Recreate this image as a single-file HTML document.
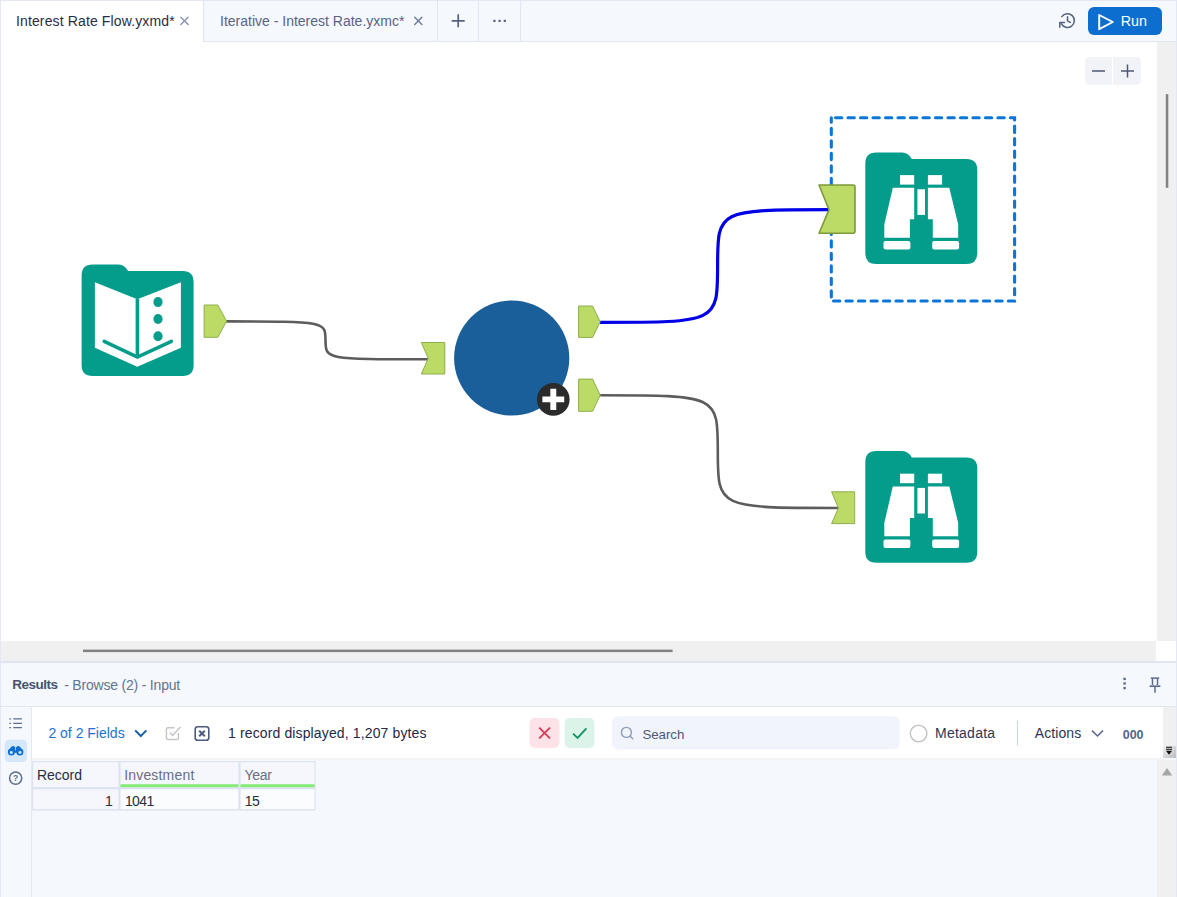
<!DOCTYPE html>
<html lang="en">
<head>
<meta charset="utf-8">
<title>Interest Rate Flow</title>
<style>
*{box-sizing:border-box;margin:0;padding:0}
html,body{width:1177px;height:897px;overflow:hidden;background:#fff}
body{position:relative;font-family:"Liberation Sans",sans-serif;font-size:14px;color:#252a45}
.abs{position:absolute}
.t{position:absolute;white-space:nowrap;line-height:1}
/* tab bar */
#tabbar{left:0;top:0;width:1177px;height:42px;background:#f5f8fd;border-top:1px solid #e3e8f4;border-bottom:1px solid #e0e6f2}
#tab1{left:1px;top:1px;width:202px;height:41px;background:#fff}
.vsep{position:absolute;top:1px;width:1px;height:40px;background:#e0e6f2}
#runbtn{left:1088px;top:7px;width:74px;height:28px;border-radius:6px;background:#0c6fd0}
/* canvas */
#canvas{left:0;top:42px;width:1157px;height:599px;background:#fff}
#vscroll{left:1157px;top:42px;width:19px;height:599px;background:#f0f0f0}
#hscroll{left:1px;top:641px;width:1155px;height:20px;background:#f0f0f0}
#zoomctl{left:1085px;top:57px;width:56px;height:28px;border-radius:5px;background:#f1f3f9}
/* results */
#reshead{left:0;top:661px;width:1177px;height:46px;background:#f5f8fd;border-top:2px solid #dfe5f2;border-bottom:1px solid #e0e6f2}
#resbody{left:0;top:707px;width:1177px;height:190px;background:#f5f8fd}
#sidebar{left:1px;top:707px;width:31px;height:190px;background:#f5f8fd;border-right:1px solid #e3e8f3}
#toolbar{left:32px;top:707px;width:1131px;height:53px;background:#fff;border-bottom:2px solid #f2f3f5}
.edge{position:absolute;top:0;width:1px;height:897px;background:#e3e8f4}
</style>
</head>
<body>
<div id="tabbar" class="abs"></div>
<div id="tab1" class="abs"></div>
<div class="vsep" style="left:203px"></div>
<div class="vsep" style="left:437px"></div>
<div class="vsep" style="left:478px"></div>
<div class="vsep" style="left:520px"></div>
<div id="runbtn" class="abs"></div>

<div id="canvas" class="abs"></div>
<div id="vscroll" class="abs"></div>
<div id="hscroll" class="abs"></div>
<div id="zoomctl" class="abs"></div>

<div id="reshead" class="abs"></div>
<div id="resbody" class="abs"></div>
<div id="sidebar" class="abs"></div>
<div id="toolbar" class="abs"></div>
<div class="edge" style="left:0"></div>
<div class="edge" style="left:1176px"></div>


<svg id="ov" class="abs" style="left:0;top:0" width="1177" height="897" viewBox="0 0 1177 897">
<!-- tab bar icons -->
<g stroke="#8a94b0" stroke-width="1.4" fill="none" stroke-linecap="round">
  <path d="M180.9 17.3 l7.2 7.2 M188.1 17.3 l-7.2 7.2"/>
</g>
<g stroke="#6f7a99" stroke-width="1.4" fill="none" stroke-linecap="round">
  <path d="M414.7 17.2 l7.2 7.2 M421.9 17.2 l-7.2 7.2"/>
</g>
<g stroke="#56617f" stroke-width="1.7" fill="none">
  <path d="M451.7 20.8 h13 M458.2 14.3 v13"/>
</g>
<g fill="#56617f">
  <rect x="493.3" y="19.8" width="2.2" height="2.2"/><rect x="498.5" y="19.8" width="2.2" height="2.2"/><rect x="503.7" y="19.8" width="2.2" height="2.2"/>
</g>
<!-- history icon -->
<g stroke="#55617f" stroke-width="1.5" fill="none" stroke-linecap="round" stroke-linejoin="round">
  <path d="M1061.8 16.6 A6.9 6.9 0 1 1 1061.3 23.7"/>
  <path d="M1064.5 22.4 H1059.8 V27.2"/>
  <path d="M1067.5 16.7 V20.8 L1070.3 22.4"/>
</g>
<!-- run triangle -->
<path d="M1099.2 15 L1112.8 22 L1099.2 29.2 Z" fill="none" stroke="#fff" stroke-width="1.9" stroke-linejoin="round"/>
<!-- zoom control -->
<rect x="1112" y="57" width="1" height="28" fill="#fff"/>
<g stroke="#4d5878" stroke-width="1.5" fill="none">
  <path d="M1092 71 h13 M1121 71 h13 M1127.5 64.5 v13"/>
</g>
<!-- scroll thumbs -->
<rect x="1165.8" y="94.2" width="2.5" height="93.6" fill="#828282"/>
<rect x="83" y="649.6" width="589.6" height="2.5" fill="#828282"/>
<rect x="1156" y="641" width="20" height="20" fill="#fff"/>
<!-- connections -->
<g fill="none" stroke-linecap="butt">
  <path d="M226 321.4 C325.5 321.4 325.5 321.4 325.5 340.3 C325.5 359.3 325.5 359.3 428 359.3" stroke="#5c5c5c" stroke-width="2.6"/>
  <path d="M600 322.4 C717.6 322.4 717.6 322.4 717.6 266 C717.6 209.7 717.6 209.7 830 209.7" stroke="#0000e6" stroke-width="3.2"/>
  <path d="M600 395.2 C717.8 395.2 717.8 395.2 717.8 451.5 C717.8 508 717.8 508 839 508" stroke="#5c5c5c" stroke-width="2.6"/>
</g>
<!-- node 1: text input (book) -->
<defs>
  <path id="folder" d="M11 0 H37 Q43 0 46.5 6.5 H101 Q112 6.5 112 17.5 V100.7 Q112 111.7 101 111.7 H11 Q0 111.7 0 100.7 V11 Q0 0 11 0 Z"/>
  <g id="bino" fill="#fff">
    <rect x="34.7" y="22.7" width="14.2" height="9.5"/>
    <rect x="62.6" y="22.7" width="14.2" height="9.5"/>
    <path d="M27.5 35.4 H48.9 V66.9 H44.6 V85.3 H19 V72 Z"/>
    <path d="M84 35.4 H62.6 V66.9 H67.5 V85.3 H92.9 V72 Z"/>
    <rect x="52.1" y="36.9" width="7.6" height="25.6"/>
    <rect x="18.2" y="88.5" width="26.9" height="8.5" rx="2"/>
    <rect x="66.9" y="88.5" width="26.9" height="8.5" rx="2"/>
  </g>
</defs>
<use href="#folder" x="81.6" y="264.4" fill="#049d8c"/>
<path d="M94.9 282.2 L137.3 299.3 L180.9 282.2 V347.8 L137.3 366.8 L94.9 347.8 Z" fill="#fff"/>
<path d="M137.4 299 V357" stroke="#049d8c" stroke-width="3.6" fill="none"/>
<path d="M104.2 341.3 L137.4 357.1 L171.4 341.3" stroke="#049d8c" stroke-width="3.5" fill="none" stroke-linecap="round" stroke-linejoin="miter"/>
<g fill="#049d8c"><ellipse cx="158" cy="302.1" rx="4.6" ry="5"/><ellipse cx="158" cy="319" rx="4.6" ry="5"/><ellipse cx="158" cy="336.2" rx="4.6" ry="5"/></g>
<!-- anchors -->
<g fill="#bbdb66" stroke="#8fae4d" stroke-width="1" stroke-linejoin="round">
  <path d="M204.1 305 H217.8 L226.6 321.2 L217.8 337.3 H204.1 Z"/>
  <path d="M421.4 342.5 H444.8 V374 H421.4 L428.2 358.3 Z"/>
  <path d="M578.6 306 H592.6 L600.2 321.8 L592.6 337.4 H578.6 Z"/>
  <path d="M578.6 379.1 H592.6 L600.2 395.2 L592.6 411.3 H578.6 Z"/>
  <path d="M831.6 491.8 H854.7 V523.6 H831.6 L838.4 508 Z"/>
</g>
<!-- macro circle -->
<circle cx="511.7" cy="358" r="57.6" fill="#1a5f99"/>
<circle cx="553.3" cy="399.4" r="16.3" fill="#2b2b2b"/>
<path d="M542.4 399.4 h21.8 M553.3 388.8 v21.2" stroke="#fff" stroke-width="5.9" fill="none"/>
<!-- browse nodes -->
<use href="#folder" x="865.3" y="152.4" fill="#049d8c"/>
<use href="#bino" x="865.3" y="152.4"/>
<use href="#folder" x="865.3" y="451" fill="#049d8c"/>
<use href="#bino" x="865.3" y="451"/>
<!-- selection box -->
<rect x="831.3" y="117.8" width="183.3" height="183.2" fill="none" stroke="#0b76d8" stroke-width="3.1" stroke-dasharray="6.28 6.21" stroke-dashoffset="8.24" stroke-linecap="round"/>
<!-- selected anchor -->
<path d="M819 185 H853 Q855 185 855 187 V231.2 Q855 233.2 853 233.2 H819 L829 209.6 Z" fill="#bbdb66" stroke="#7e9a3a" stroke-width="1.6" stroke-linejoin="round"/>
<!-- results header icons -->
<g fill="#5d6b8e">
  <rect x="1123.4" y="677.7" width="2.4" height="2.4"/><rect x="1123.4" y="682.3" width="2.4" height="2.4"/><rect x="1123.4" y="686.9" width="2.4" height="2.4"/>
</g>
<g stroke="#5d6b8e" fill="none" stroke-width="1.5">
  <path d="M1150.8 678.1 h8.4"/>
  <path d="M1152.5 678.2 V685 M1157.5 678.2 V685"/>
  <path d="M1149.6 686.2 h10.8" stroke-width="1.7"/>
  <path d="M1155 686.3 V692.8"/>
</g>
<!-- sidebar icons -->
<g stroke="#5d6b8e" stroke-width="1.3" fill="none">
  <path d="M13.3 718.9 h8.6 M13.3 723.3 h8.6 M13.3 727.6 h8.6"/>
  <path d="M9.3 718.9 h1.6 M9.3 723.3 h1.6 M9.3 727.6 h1.6"/>
</g>
<rect x="4.6" y="739.8" width="22.4" height="22.2" rx="4.5" fill="#d4e7fb"/>
<g fill="#0c6fd0">
  <path d="M7.9 752.1 a3.5 3.5 0 1 0 7 0 a3.5 3.5 0 1 0 -7 0 z M9.7 752.3 a1.6 1.6 0 1 1 3.2 0 a1.6 1.6 0 1 1 -3.2 0 z" fill-rule="evenodd"/>
  <path d="M16.4 752.1 a3.5 3.5 0 1 0 7 0 a3.5 3.5 0 1 0 -7 0 z M18.4 752.3 a1.6 1.6 0 1 1 3.2 0 a1.6 1.6 0 1 1 -3.2 0 z" fill-rule="evenodd"/>
  <path d="M8.1 750.9 L11.6 746.4 Q12.6 745.7 14 746.3 L15.3 747.2 V751.2 Z"/>
  <path d="M23.2 750.9 L19.7 746.4 Q18.7 745.7 17.3 746.3 L16 747.2 V751.2 Z"/>
  <rect x="14" y="750.4" width="3.4" height="2.4"/>
</g>
<circle cx="15.65" cy="778.1" r="6.1" fill="none" stroke="#5d6b8e" stroke-width="1.5"/>
<!-- toolbar icons -->
<path d="M135.2 730.4 L140.8 736 L146.4 730.4" fill="none" stroke="#1b5fab" stroke-width="2" />
<g fill="none" stroke="#c4c6cb" stroke-width="1.5" stroke-linejoin="round">
  <path d="M178.4 733 V738 Q178.4 739.6 176.8 739.6 H168 Q166.4 739.6 166.4 738 V729.4 Q166.4 727.8 168 727.8 H174.5"/>
  <path d="M169.8 732.6 L172.6 735.6 L180.4 727"/>
</g>
<rect x="195.2" y="726.7" width="13.6" height="13.6" rx="2.6" fill="none" stroke="#4d5b7e" stroke-width="1.6"/>
<path d="M199.2 730.7 l5.6 5.6 M204.8 730.7 l-5.6 5.6" stroke="#4d5b7e" stroke-width="2" fill="none"/>
<rect x="529.6" y="718" width="29.8" height="30" rx="5" fill="#fde3e7"/>
<path d="M539.2 727.6 l10.8 10.8 M550 727.6 l-10.8 10.8" stroke="#d93a55" stroke-width="1.9" fill="none"/>
<rect x="564.6" y="718" width="29.8" height="30" rx="5" fill="#dcf3ea"/>
<path d="M573 733.6 L577.6 738 L586.4 728.4" stroke="#17936b" stroke-width="1.9" fill="none"/>
<rect x="612" y="716.2" width="287.6" height="33.2" rx="6" fill="#f1f4fa"/>
<circle cx="626.4" cy="732.4" r="5" fill="none" stroke="#8f9bb8" stroke-width="1.4"/>
<path d="M630 736 L633.2 739.2" stroke="#8f9bb8" stroke-width="1.4" fill="none"/>
<circle cx="918.6" cy="733.5" r="8.3" fill="#fff" stroke="#c6c6c6" stroke-width="1.5"/>
<rect x="1017" y="720.7" width="1" height="24.8" fill="#c9d2e6"/>
<path d="M1092 730.6 L1097.5 736 L1103 730.6" fill="none" stroke="#5d6b8e" stroke-width="1.6"/>
<!-- right gutters -->
<rect x="1163" y="707" width="13" height="39" fill="#f0f0f0"/>
<linearGradient id="ovg" x1="0" y1="0" x2="1" y2="1"><stop offset="0" stop-color="#f0f0f0"/><stop offset="1" stop-color="#bdbdbd"/></linearGradient>
<rect x="1163" y="746" width="13" height="12" fill="url(#ovg)"/>
<path d="M1166 747.2 h6 M1166 749.2 h6" stroke="#111" stroke-width="1.1"/>
<path d="M1166 750.8 h6 l-3 4 z" fill="#111"/>
<rect x="1157" y="760" width="19" height="137" fill="#f0f0f0"/>
<path d="M1161.8 775.4 L1167 768 L1172.2 775.4 Z" fill="#a6a6a6"/>
<!-- grid -->
<g>
  <rect x="32" y="761" width="283.6" height="49.6" fill="#dde3f0"/>
  <rect x="33.2" y="762.2" width="85.2" height="24.8" fill="#f5f7fc"/>
  <rect x="120.6" y="762.2" width="117.7" height="22.1" fill="#f5f7fc"/>
  <rect x="240.6" y="762.2" width="73.9" height="22.1" fill="#f5f7fc"/>
  <rect x="33.2" y="789.3" width="85.2" height="19.8" fill="#f5f7fc"/>
  <rect x="120.6" y="789.3" width="117.7" height="19.8" fill="#fbfcfe"/>
  <rect x="240.6" y="789.3" width="73.9" height="19.8" fill="#fbfcfe"/>
  <rect x="120.6" y="784.3" width="117.7" height="2.8" fill="#84ec70"/>
  <rect x="240.6" y="784.3" width="73.9" height="2.8" fill="#84ec70"/>
</g>
<!--SVG-MORE-->
</svg>
<span class="t" id="tx1" style="left:16px;top:14px;color:#2a2d45;letter-spacing:0.13px">Interest Rate Flow.yxmd*</span>
<span class="t" id="tx2" style="left:220px;top:14px;color:#5a6383">Iterative - Interest Rate.yxmc*</span>
<span class="t" id="tx3" style="left:1120.8px;top:14.1px;color:#fff;font-size:14.3px">Run</span>
<span class="t" id="tx4" style="left:12.3px;top:678.3px;color:#46536f;font-weight:bold;font-size:13.5px;letter-spacing:-0.5px">Results</span>
<span class="t" id="tx5" style="left:64.2px;top:678px;color:#66728f;letter-spacing:-0.2px">- Browse (2) - Input</span>
<span class="t" id="tx6" style="left:48.4px;top:726.4px;color:#1a73d0">2 of 2 Fields</span>
<span class="t" id="tx7" style="left:228px;top:725.5px;color:#252a45;letter-spacing:0.13px">1 record displayed, 1,207 bytes</span>
<span class="t" id="tx8" style="left:642.4px;top:727.7px;color:#4d5878;font-size:13.3px;letter-spacing:-0.05px">Search</span>
<span class="t" id="tx9" style="left:935px;top:726.3px;color:#2d3555;letter-spacing:0.25px">Metadata</span>
<span class="t" id="tx10" style="left:1034.7px;top:726.3px;color:#2d3555;letter-spacing:0.1px">Actions</span>
<span class="t" id="tx11" style="left:1122.7px;top:729px;color:#56628a;font-weight:bold;font-size:12.5px">000</span>
<span class="t" id="tx12" style="left:36.9px;top:768px;color:#2a2d3f">Record</span>
<span class="t" id="tx13" style="left:124.2px;top:768px;color:#6a6e7e;letter-spacing:0.18px">Investment</span>
<span class="t" id="tx14" style="left:244.4px;top:768px;color:#6a6e7e;letter-spacing:-0.25px">Year</span>
<span class="t" id="tx15" style="left:105px;top:794px;color:#2a2d3f">1</span>
<span class="t" id="tx16" style="left:124.9px;top:794px;color:#2a2d3f;letter-spacing:-0.6px">1041</span>
<span class="t" id="tx17" style="left:244.8px;top:794px;color:#2a2d3f;letter-spacing:-0.6px">15</span>
<span class="t" id="tx18" style="left:13.05px;top:774.3px;color:#5d6b8e;font-size:8.5px;font-weight:bold">?</span>
</body>
</html>
